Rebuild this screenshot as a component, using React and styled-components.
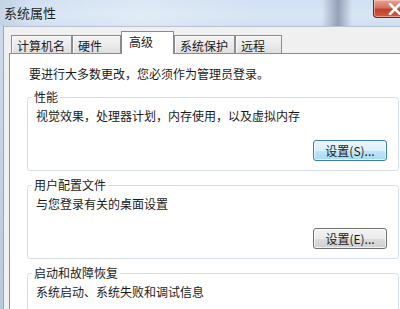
import React from "react";
import styled, { createGlobalStyle } from "styled-components";

const GlobalStyle = createGlobalStyle`
  html, body {
    margin: 0;
    padding: 0;
    overflow: hidden;
    background: #f0f0f0;
  }
  body {
    font-family: "Noto Sans CJK SC", "Noto Sans", sans-serif;
    font-size: 12px;
    color: #1a1a1a;
  }
`;

const tabs = [
  { label: "计算机名", width: 61 },
  { label: "硬件", width: 49 },
  { label: "高级", width: 53, active: true },
  { label: "系统保护", width: 61 },
  { label: "远程", width: 47 },
];

// The last group's button falls below the visible window
const groups = [
  {
    title: "性能",
    text: "视觉效果，处理器计划，内存使用，以及虚拟内存",
    button: "设置(S)...",
    focused: true,
  },
  {
    title: "用户配置文件",
    text: "与您登录有关的桌面设置",
    button: "设置(E)...",
  },
  {
    title: "启动和故障恢复",
    text: "系统启动、系统失败和调试信息",
  },
];

function App() {
  return (
    <>
      <GlobalStyle />
      <Window>
        <TitleBar>
          <Title>系统属性</Title>
          <CloseButton>
            <svg width="14" height="12" viewBox="0 0 14 12">
              <path
                d="M2 1 L12 11 M12 1 L2 11"
                stroke="#ffffff"
                strokeWidth="2.6"
                strokeLinecap="round"
              />
            </svg>
          </CloseButton>
        </TitleBar>
        <Client>
          <TabStrip>
            {tabs.map((tab) => (
              <Tab key={tab.label} $width={tab.width} $active={tab.active}>
                {tab.label}
              </Tab>
            ))}
          </TabStrip>
          <Panel>
            <Intro>要进行大多数更改，您必须作为管理员登录。</Intro>
            {groups.map((group) => (
              <GroupBox key={group.title}>
                <Legend>{group.title}</Legend>
                <GroupText>{group.text}</GroupText>
                <ButtonRow>
                  {group.button && (
                    <Button $focused={group.focused}>{group.button}</Button>
                  )}
                </ButtonRow>
              </GroupBox>
            ))}
          </Panel>
        </Client>
      </Window>
    </>
  );
}

export default App;

const Window = styled.div`
  width: 420px;
  height: 309px;
  overflow: hidden;
  display: flex;
  flex-direction: column;
  background: linear-gradient(180deg, #cddcee 0%, #b9c9dc 100%);
`;

const TitleBar = styled.div`
  flex: none;
  height: 26px;
  display: flex;
  align-items: flex-start;
  background:
    linear-gradient(
      90deg,
      rgba(90, 100, 130, 0.12) 0px,
      rgba(255, 255, 255, 0) 30px,
      rgba(255, 255, 255, 0.25) 140px,
      rgba(255, 255, 255, 0) 260px,
      rgba(70, 80, 110, 0) 322px,
      rgba(70, 80, 110, 0.45) 338px,
      rgba(70, 80, 110, 0) 352px
    ),
    linear-gradient(180deg, #d0e0f2 0%, #d8e5f4 60%, #cfdff0 100%);
`;

const Title = styled.div`
  flex: 1;
  padding: 5px 0 0 4px;
  font-size: 13px;
  line-height: 16px;
  color: #1e1e1e;
`;

const CloseButton = styled.div`
  flex: none;
  width: 43px;
  height: 18px;
  margin-right: 4px;
  box-sizing: border-box;
  display: flex;
  align-items: center;
  justify-content: center;
  border: 1px solid #6b2a22;
  border-top: none;
  border-radius: 0 0 4px 4px;
  background: linear-gradient(180deg, #e8a493 0%, #d2735e 45%, #c0402a 55%, #d25a3f 100%);
  box-shadow: inset 0 0 0 1px rgba(255, 220, 210, 0.5);
`;

const Client = styled.div`
  flex: 1;
  margin-left: 3px;
  border-left: 1px solid #97a6b9;
  border-top: 1px solid #b6c2d0;
  background: #f0f0f0;
  padding: 4px 0 0 5px;
  display: flex;
  flex-direction: column;
  min-height: 0;
`;

const TabStrip = styled.div`
  display: flex;
  align-items: flex-end;
  flex: none;
  height: 23px;
  padding-left: 2px;
  margin-bottom: -1px;
  position: relative;
  z-index: 1;
`;

const Tab = styled.div`
  box-sizing: border-box;
  width: ${(p) => p.$width}px;
  height: ${(p) => (p.$active ? 23 : 18)}px;
  margin-bottom: ${(p) => (p.$active ? 0 : 1)}px;
  padding: ${(p) => (p.$active ? "2px 0 0 7px" : "2px 0 0 5px")};
  border: 1px solid #898c95;
  border-bottom: none;
  line-height: 16px;
  white-space: nowrap;
  color: #1a1a1a;
  background: ${(p) =>
    p.$active
      ? "#ffffff"
      : "linear-gradient(180deg, #f4f4f4 0%, #ececec 50%, #dedede 100%)"};
  box-shadow: ${(p) =>
    p.$active ? "none" : "inset 1px 1px 0 #fcfcfc"};
`;

const Panel = styled.div`
  flex: 1;
  min-height: 0;
  border: 1px solid #898c95;
  border-right: none;
  border-bottom: none;
  background: #ffffff;
  padding: 12px 0 0 17px;
`;

const Intro = styled.div`
  padding-left: 2px;
  line-height: 16px;
  margin-bottom: 8px;
`;

const GroupBox = styled.fieldset`
  width: 372px;
  box-sizing: border-box;
  margin: 0 0 7px 0;
  padding: 4px 11px 9px 8px;
  border: 1px solid #d5dfe5;
  border-radius: 3px;
  min-inline-size: 0;
`;

const Legend = styled.legend`
  padding: 0 2px;
  margin-left: -4px;
  line-height: 14px;
  font-size: 12px;
`;

const GroupText = styled.div`
  line-height: 16px;
`;

const ButtonRow = styled.div`
  display: flex;
  justify-content: flex-end;
  height: 21px;
  margin-top: 16px;
`;

const Button = styled.div`
  box-sizing: border-box;
  width: 74px;
  height: 21px;
  display: flex;
  align-items: center;
  justify-content: center;
  border-radius: 3px;
  font-size: 12px;
  border: 1px solid ${(p) => (p.$focused ? "#3c7fb1" : "#707070")};
  background: ${(p) =>
    p.$focused
      ? "linear-gradient(180deg, #eaf6fd 0%, #d9f0fc 50%, #bee6fd 51%, #a7d9f5 100%)"
      : "linear-gradient(180deg, #f2f2f2 0%, #ebebeb 50%, #dddddd 51%, #cfcfcf 100%)"};
  box-shadow: inset 0 0 0 1px rgba(255, 255, 255, 0.7);
`;
